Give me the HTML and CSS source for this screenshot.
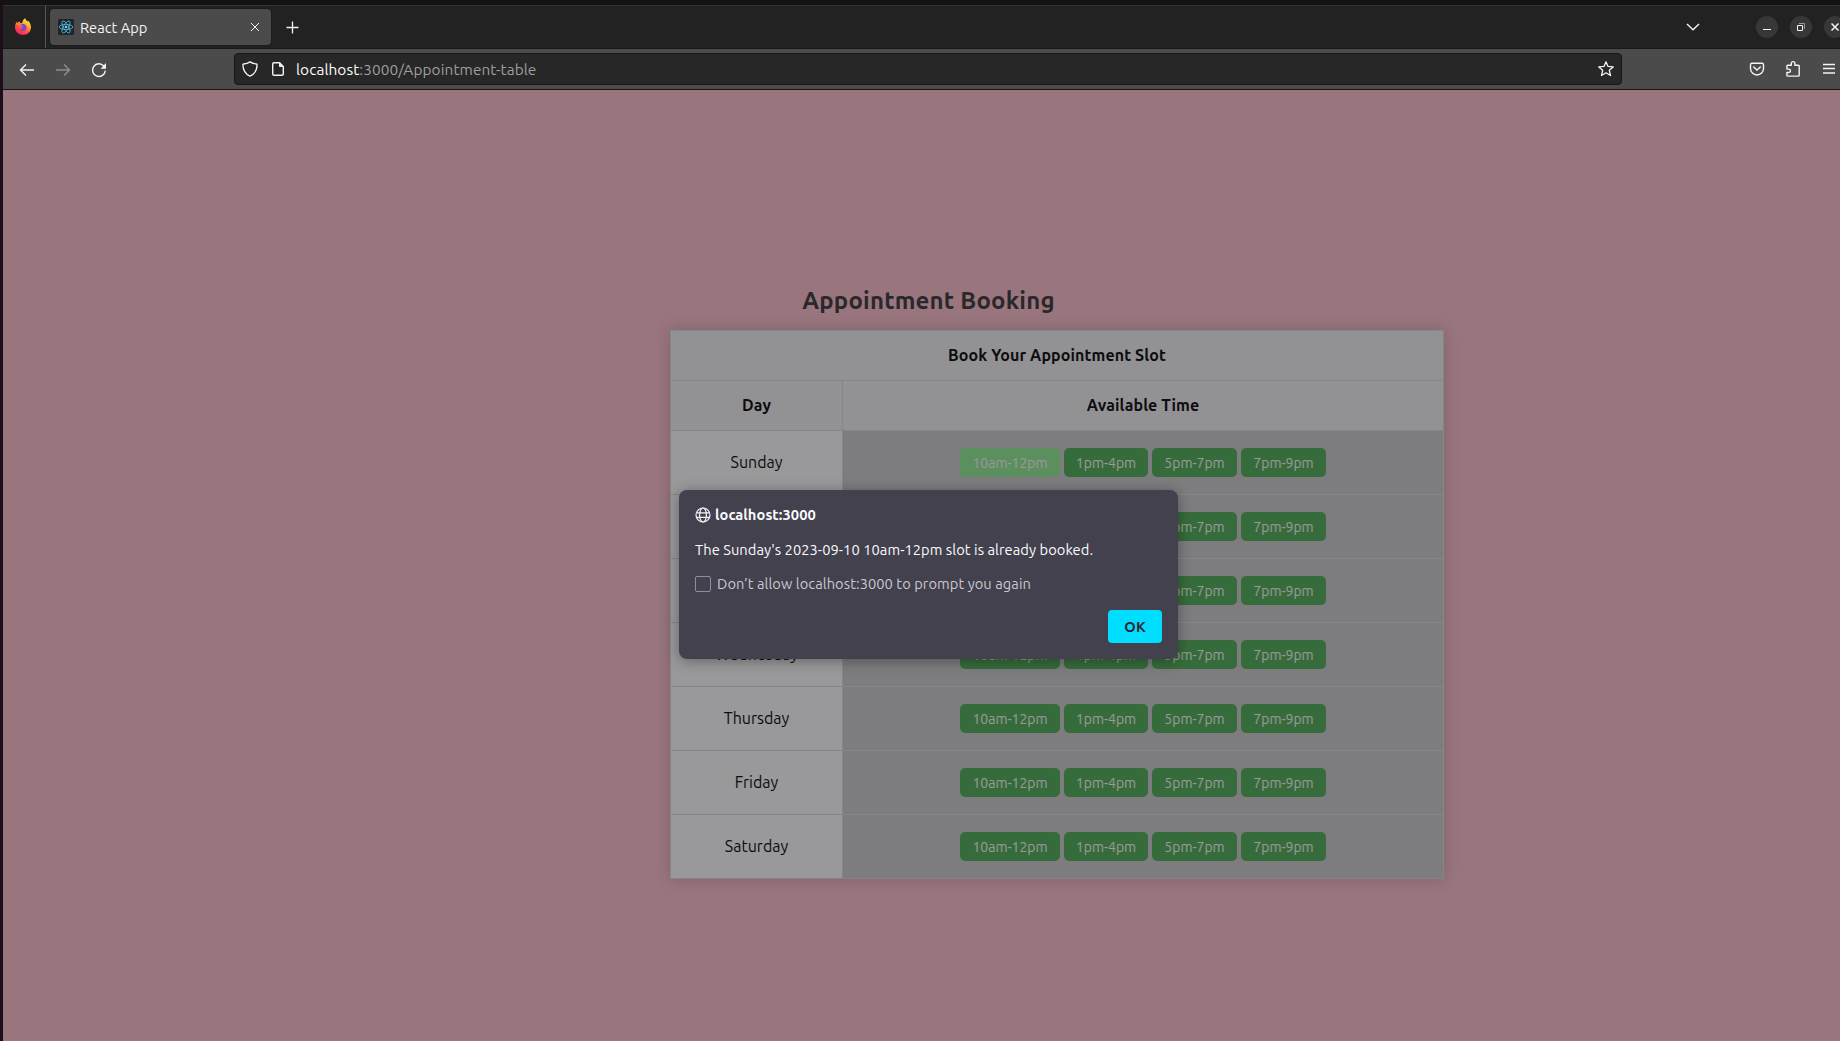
FILE: index.html
```html
<!DOCTYPE html>
<html lang="en">
<head>
<meta charset="utf-8">
<title>React App</title>
<link rel="stylesheet" href="styles.css">
</head>
<body>
<div class="window">
  <header class="titlebar">
    <div class="brand">
      <svg width="18" height="18" viewBox="0 0 18 18">
        <defs>
          <linearGradient id="fire" x1="0.8" y1="0" x2="0.25" y2="1">
            <stop offset="0" stop-color="#fff04a"/><stop offset=".35" stop-color="#ffae25"/>
            <stop offset=".65" stop-color="#ff4f3d"/><stop offset="1" stop-color="#ee1a78"/>
          </linearGradient>
        </defs>
        <path fill="url(#fire)" d="M1 9.6C.9 7 1.8 5 3 3.6l.5 1.5L5.600 3.200l.4 1.900 2.200.1C8.400 2.600 9.600 1 11.400.3c.1 1.700 1.100 2.300 2 3.100l.4-1C16 4.300 17 6.800 17 9.300 17 13.800 13.500 17 9 17S1.200 13.800 1 9.600Z"/>
        <path fill="#7a3fe0" d="M6 7.600C7.200 5.800 10 5.400 11.600 7c1.600 1.700 1.200 4.400-.7 5.400-2 1-4.300.1-5-1.500 1.400.7 3 .4 3.500-.8-.9.1-1.800-.2-2-.9.5-.6 1.600-.4 1.900-1.200-.8-.4-2.300-.7-3.300-.4Z"/>
      </svg>
    </div>
    <div class="tab">
      <svg class="favicon" width="16" height="16" viewBox="0 0 16 16">
        <rect width="16" height="16" rx="1.500" fill="#20232a"/>
        <g fill="none" stroke="#55bcd8" stroke-width=".8">
          <ellipse cx="8" cy="8" rx="6.800" ry="2.600"/>
          <ellipse cx="8" cy="8" rx="6.800" ry="2.600" transform="rotate(60 8 8)"/>
          <ellipse cx="8" cy="8" rx="6.800" ry="2.600" transform="rotate(120 8 8)"/>
        </g>
        <circle cx="8" cy="8" r="1.300" fill="#61dafb"/>
      </svg>
      <span class="tab-title">React App</span>
      <svg class="line" width="10" height="10" viewBox="0 0 10 10"><path d="M1 1l8 8M9 1L1 9"/></svg>
    </div>
    <svg class="line new-tab" width="13" height="13" viewBox="0 0 13 13"><path stroke-width="1.300" d="M6.500.5v12M.5 6.500h12"/></svg>
    <svg class="line all-tabs" width="14" height="8" viewBox="0 0 14 8"><path stroke-width="1.400" d="M1 1l6 5.800L13 1"/></svg>
    <div class="window-buttons">
      <span class="round"><svg width="10" height="10" viewBox="0 0 10 10"><path d="M1 7h8v1H1z" fill="#fff"/></svg></span>
      <span class="round"><svg class="line" width="10" height="10" viewBox="0 0 10 10"><path d="M1.500 3.500h5v5h-5z"/><path stroke="#999" d="M3 1.500h5.500V7"/></svg></span>
      <span class="round"><svg class="line" width="10" height="10" viewBox="0 0 10 10"><path stroke-width="1.500" d="M1.500 1.500l7 7M8.500 1.500l-7 7"/></svg></span>
    </div>
  </header>

  <nav class="toolbar">
    <div class="history">
      <svg class="line" width="16" height="16" viewBox="0 0 16 16"><path stroke-width="1.400" d="M15 8H1.500M7 2.500L1.500 8 7 13.500"/></svg>
      <svg class="line dim" width="16" height="16" viewBox="0 0 16 16"><path stroke-width="1.400" d="M1 8h13.500M9 2.500L14.500 8 9 13.500"/></svg>
      <svg class="line" width="16" height="16" viewBox="0 0 16 16"><path stroke-width="1.400" d="M12.800 4A6.400 6.400 0 1 0 14.300 8.500"/><path fill="#f4f4f4" stroke="none" d="M15 1v5.200c0 .4-.3.600-.6.600H9.600z"/></svg>
    </div>
    <div class="urlbar">
      <svg class="line" width="16" height="16" viewBox="0 0 16 16"><path stroke-width="1.300" d="M8 .9C6.200 2.200 3.900 2.900 1.500 3c-.4 0-.6.200-.6.700.1 5.300 2.200 9.200 7.100 11.500 4.900-2.300 7-6.200 7.100-11.500 0-.5-.2-.7-.6-.7C12.100 2.900 9.800 2.200 8 .9Z"/></svg>
      <svg class="line" width="14" height="16" viewBox="0 0 14 16"><path stroke-width="1.400" d="M8.500 1.700H3c-.8 0-1.300.5-1.300 1.300v10c0 .8.500 1.300 1.300 1.300h8c.8 0 1.300-.5 1.300-1.300V5.500z"/><path fill="#eee" stroke="none" d="M8 1.200v4c0 .5.300.8.800.8h4z"/></svg>
      <span class="url"><span class="host">localhost</span>:3000/Appointment-table</span>
      <svg class="line" width="18" height="18" viewBox="0 0 18 18"><path stroke-width="1.300" stroke-linejoin="round" d="M9 1.800l2 4.600 5.200.500-3.900 3.400 1.200 5.200L9 12.800l-4.500 2.700 1.200-5.200L1.800 6.900 7 6.400z"/></svg>
    </div>
    <div class="actions">
      <svg class="line" width="16" height="16" viewBox="0 0 16 16"><path stroke-width="1.400" d="M3 2.200h10c.9 0 1.500.6 1.500 1.500V7.500a6.500 6.500 0 0 1-13 0V3.700c0-.9.6-1.500 1.500-1.500Z"/><path stroke-width="1.400" stroke-linecap="round" d="M4.700 6L8 9l3.300-3"/></svg>
      <svg class="line" width="16" height="18" viewBox="0 0 16 18"><path stroke-width="1.400" stroke-linejoin="round" d="M6.300 5.200V3.400a1.800 1.800 0 0 1 3.600 0v1.800h3.400c.6 0 .9.300.9.900v9.100c0 .6-.3.900-.9.900H2.800c-.6 0-.9-.3-.9-.9v-2.700h1.900a1.700 1.700 0 0 0 0-3.400H1.900V6.100c0-.6.300-.9.900-.9z"/></svg>
      <svg class="line" width="14" height="12" viewBox="0 0 14 12"><path stroke-width="1.300" d="M1 1.500h12M1 5.500h12M1 10h12"/></svg>
    </div>
  </nav>

  <div class="viewport">
    <main class="page">
      <h1>Appointment Booking</h1>
      <table class="slots">
        <colgroup><col class="col-day"><col></colgroup>
        <thead>
          <tr><th colspan="2">Book Your Appointment Slot</th></tr>
          <tr><th>Day</th><th>Available Time</th></tr>
        </thead>
        <tbody>
          <tr><td class="day">Sunday</td><td class="times"><div class="times-row"><button class="slot wide booked">10am-12pm</button><button class="slot first">1pm-4pm</button><button class="slot">5pm-7pm</button><button class="slot">7pm-9pm</button></div></td></tr>
          <tr><td class="day">Monday</td><td class="times"><div class="times-row"><button class="slot wide">10am-12pm</button><button class="slot first">1pm-4pm</button><button class="slot">5pm-7pm</button><button class="slot">7pm-9pm</button></div></td></tr>
          <tr><td class="day">Tuesday</td><td class="times"><div class="times-row"><button class="slot wide">10am-12pm</button><button class="slot first">1pm-4pm</button><button class="slot">5pm-7pm</button><button class="slot">7pm-9pm</button></div></td></tr>
          <tr><td class="day">Wednesday</td><td class="times"><div class="times-row"><button class="slot wide">10am-12pm</button><button class="slot first">1pm-4pm</button><button class="slot">5pm-7pm</button><button class="slot">7pm-9pm</button></div></td></tr>
          <tr><td class="day">Thursday</td><td class="times"><div class="times-row"><button class="slot wide">10am-12pm</button><button class="slot first">1pm-4pm</button><button class="slot">5pm-7pm</button><button class="slot">7pm-9pm</button></div></td></tr>
          <tr><td class="day">Friday</td><td class="times"><div class="times-row"><button class="slot wide">10am-12pm</button><button class="slot first">1pm-4pm</button><button class="slot">5pm-7pm</button><button class="slot">7pm-9pm</button></div></td></tr>
          <tr><td class="day">Saturday</td><td class="times"><div class="times-row"><button class="slot wide">10am-12pm</button><button class="slot first">1pm-4pm</button><button class="slot">5pm-7pm</button><button class="slot">7pm-9pm</button></div></td></tr>
        </tbody>
      </table>
    </main>
    <div class="overlay">
      <section class="dialog">
        <div class="dialog-title">
          <svg class="line" width="16" height="16" viewBox="0 0 16 16"><g stroke-width="1.200"><circle cx="8" cy="8" r="7"/><ellipse cx="8" cy="8" rx="3.400" ry="7"/><path d="M1.500 5.800h13M1.500 10.300h13"/></g></svg>
          <strong>localhost:3000</strong>
        </div>
        <p class="message">The Sunday's 2023-09-10 10am-12pm slot is already booked.</p>
        <label class="mute"><span class="checkbox"></span><span>Don’t allow localhost:3000 to prompt you again</span></label>
        <button class="ok">OK</button>
      </section>
    </div>
  </div>
</div>
</body>
</html>
```
FILE: styles.css
```css
* { box-sizing: border-box; }

body {
  margin: 0;
  height: 1041px;
  padding: 5px 0 0 3px;
  overflow: hidden;
  background: linear-gradient(#131313 5px, #1c0f19 5px);
  font-family: Ubuntu, "Noto Sans", sans-serif;
}

button { border: 0; padding: 0; font-family: inherit; }

.window { display: flex; flex-direction: column; height: 1036px; }

.line { fill: none; stroke: #f4f4f4; flex: none; }
.dim { opacity: .4; }

/* Tab strip */
.titlebar {
  display: flex;
  align-items: center;
  height: 44px;
  flex: none;
  background: #222;
  border-top: 1px solid #333;
  border-bottom: 1px solid #181818;
}
.brand {
  display: flex;
  align-items: center;
  width: 43px;
  height: 100%;
  padding-left: 11px;
  border-right: 1px solid #565656;
}
.tab {
  display: flex;
  align-items: center;
  width: 221px;
  height: 36px;
  margin-left: 4px;
  padding: 0 11px 0 8px;
  border-radius: 4px;
  background: #4b4b4b;
  box-shadow: 0 0 2px #0c0c0c;
}
.tab-title {
  flex: 1;
  margin-left: 6px;
  padding-top: 2px;
  color: #f3f3f3;
  font-size: 14.667px;
  line-height: 20px;
}
.new-tab { margin-left: 15px; }
.all-tabs { margin-left: auto; }
.window-buttons { display: flex; gap: 12px; width: 84px; margin-left: 56px; }
.round {
  display: flex;
  align-items: center;
  justify-content: center;
  flex: none;
  width: 22px;
  height: 22px;
  border-radius: 50%;
  background: #373737;
}

/* Navigation bar */
.toolbar {
  display: flex;
  align-items: center;
  height: 41px;
  flex: none;
  background: #4b4b4b;
  border-bottom: 1px solid #161616;
}
.history { display: flex; gap: 20px; width: 231px; padding: 1px 0 0 16px; }
.urlbar {
  display: flex;
  align-items: center;
  width: 1388px;
  height: 32px;
  padding: 0 6px 0 7px;
  border: 1px solid #171717;
  border-radius: 4px;
  background: #272727;
}
.urlbar svg + svg { margin-left: 13px; }
.url {
  flex: 1;
  margin-left: 11px;
  padding-top: 2px;
  color: #9e9e9e;
  font-size: 15.4px;
  letter-spacing: .08px;
  line-height: 20px;
}
.host { color: #fbfbfb; }
.actions { display: flex; align-items: center; gap: 20px; margin-left: 127px; }
.actions svg:last-child { margin-left: 1px; }

/* The browser window runs slightly past the right edge of the screen */
.viewport {
  position: relative;
  flex: 1;
  width: 1851px;
  background: #ffc0cb;
}
.page { display: flex; flex-direction: column; padding-top: 195px; }
h1 {
  margin: 0 0 13px;
  color: #333;
  font-size: 24px;
  letter-spacing: .2px;
  line-height: 32px;
  text-align: center;
}
.slots {
  width: 774px;
  margin-left: 667px;
  table-layout: fixed;
  border-collapse: collapse;
  background: #fff;
  box-shadow: 0 0 15px rgba(0, 0, 0, .2);
  color: #000;
}
.col-day { width: 172px; }
th, td {
  height: 64px;
  padding: 0;
  border: 1px solid #ddd;
  text-align: center;
}
th {
  height: 50px;
  padding-bottom: 2px;
  background: #f2f2f2;
  font-size: 16px;
  letter-spacing: .1px;
}
.day { padding-bottom: 1px; font-size: 16px; }
.times { background: #ccc; }
.times-row { display: flex; justify-content: center; gap: 4px; }
.slot {
  width: 85px;
  height: 29px;
  padding-top: 1px;
  border-radius: 5px;
  background: #4caf50;
  color: #fff;
  font-size: 14px;
}
.slot.wide { width: 100px; }
.slot.first { width: 84px; }
.slot.booked { background: #90ee90; }

/* Alert prompt */
.overlay {
  position: absolute;
  inset: 0;
  display: flex;
  justify-content: center;
  align-items: flex-start;
  padding-top: 400px;
  background: rgba(28, 27, 34, .45);
}
.dialog {
  display: flex;
  flex-direction: column;
  width: 499px;
  height: 169px;
  padding: 15px 16px 16px;
  border-radius: 8px;
  background: #42414d;
  box-shadow: 0 2px 14px rgba(0, 0, 0, .35);
  color: #fbfbfe;
  font-size: 14.667px;
  letter-spacing: .06px;
  line-height: 20px;
}
.dialog-title { display: flex; align-items: center; gap: 4px; }
.message { margin: 15px 0 0; }
.mute {
  display: flex;
  align-items: center;
  gap: 6px;
  margin-top: 14px;
  color: #c8c8ce;
}
.checkbox {
  width: 16px;
  height: 16px;
  border: 1px solid #8f8f9d;
  border-radius: 2px;
}
.ok {
  align-self: flex-end;
  width: 54px;
  height: 33px;
  margin-top: auto;
  border-radius: 4px;
  background: #00ddff;
  color: #2b2a33;
  font-size: 14.667px;
  font-weight: 700;
}
```
